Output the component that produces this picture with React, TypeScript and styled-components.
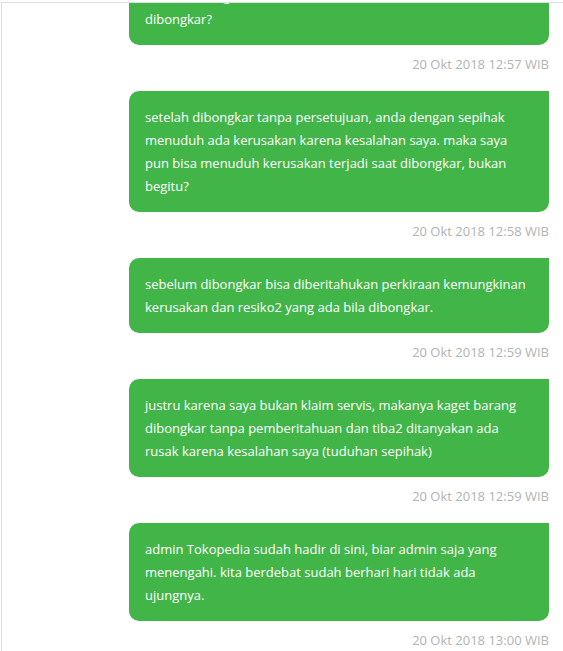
import styled, { createGlobalStyle } from 'styled-components';

const GlobalStyle = createGlobalStyle`
  html, body {
    margin: 0;
    padding: 0;
    background: #ffffff;
  }
  body {
    font-family: 'Open Sans', 'Noto Sans', sans-serif;
    height: 651px;
    overflow: hidden;
  }
`;

const Frame = styled.div`
  margin-left: 1px;
  border-left: 1px solid #e0e0e0;
  height: 651px;
`;

const Thread = styled.div`
  margin-top: 2px;
  border-top: 1px solid #e0e0e0;
  height: 648px;
  overflow: hidden;
  display: flex;
  flex-direction: column;
  align-items: flex-end;
  padding-right: 14px;
`;

// first message is scrolled partly out of view
const Message = styled.div<{ $first?: boolean }>`
  display: flex;
  flex-direction: column;
  align-items: flex-end;
  margin-top: ${({ $first }) => ($first ? '-33px' : '0')};
  margin-bottom: 18px;
`;

const Bubble = styled.div`
  box-sizing: border-box;
  width: 420px;
  padding: 15px 16px 14px;
  background: #42b549;
  color: #ffffff;
  font-size: 13px;
  line-height: 23px;
  border-radius: 10px 0 10px 10px;
`;

const Timestamp = styled.div`
  margin-top: 10px;
  font-size: 13px;
  line-height: 18px;
  color: #b3b3b3;
`;

const messages = [
  {
    text: 'alasan barang tersebut ditahan lalu harus dibuka dan dibongkar?',
    time: '20 Okt 2018 12:57 WIB',
  },
  {
    text: 'setelah dibongkar tanpa persetujuan, anda dengan sepihak menuduh ada kerusakan karena kesalahan saya. maka saya pun bisa menuduh kerusakan terjadi saat dibongkar, bukan begitu?',
    time: '20 Okt 2018 12:58 WIB',
  },
  {
    text: 'sebelum dibongkar bisa diberitahukan perkiraan kemungkinan kerusakan dan resiko2 yang ada bila dibongkar.',
    time: '20 Okt 2018 12:59 WIB',
  },
  {
    text: 'justru karena saya bukan klaim servis, makanya kaget barang dibongkar tanpa pemberitahuan dan tiba2 ditanyakan ada rusak karena kesalahan saya (tuduhan sepihak)',
    time: '20 Okt 2018 12:59 WIB',
  },
  {
    text: 'admin Tokopedia sudah hadir di sini, biar admin saja yang menengahi. kita berdebat sudah berhari hari tidak ada ujungnya.',
    time: '20 Okt 2018 13:00 WIB',
  },
];

const App = () => {
  return (
    <>
      <GlobalStyle />
      <Frame>
        <Thread>
          {messages.map((m, i) => (
            <Message key={i} $first={i === 0}>
              <Bubble>{m.text}</Bubble>
              <Timestamp>{m.time}</Timestamp>
            </Message>
          ))}
        </Thread>
      </Frame>
    </>
  );
};

export default App;
